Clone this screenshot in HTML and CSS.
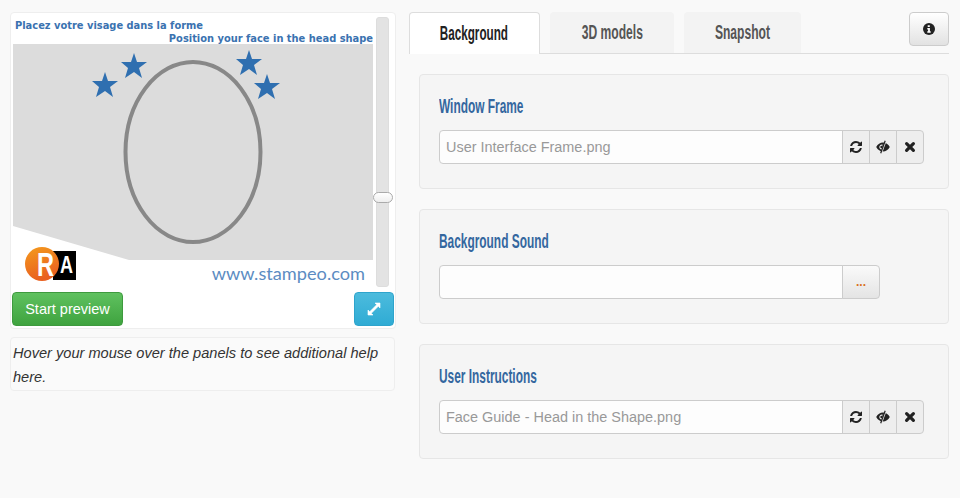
FILE: index.html
```html
<!DOCTYPE html>
<html lang="en">
<head>
<meta charset="utf-8">
<title>Stampeo</title>
<link rel="stylesheet" href="styles.css">
</head>
<body>
<svg class="sprites" width="0" height="0" aria-hidden="true">
  <symbol id="i-refresh" viewBox="0 0 1536 1536"><path d="M1511 928q0 5-1 7-64 268-268 434.5t-478 166.5q-146 0-282.5-55t-243.5-157l-129 129q-19 19-45 19t-45-19-19-45v-448q0-26 19-45t45-19h448q26 0 45 19t19 45-19 45l-137 137q71 66 161 102t187 36q134 0 250-65t186-179q11-17 53-117 8-23 30-23h192q13 0 22.5 9.5t9.5 22.5zm25-800v448q0 26-19 45t-45 19h-448q-26 0-45-19t-19-45 19-45l138-138q-148-137-349-137-134 0-250 65t-186 179q-11 17-53 117-8 23-30 23h-199q-13 0-22.5-9.5t-9.5-22.5v-7q65-268 270-434.5t480-166.5q146 0 284 55.5t245 156.5l130-129q19-19 45-19t45 19 19 45z"/></symbol>
  <symbol id="i-eye" viewBox="0 0 14 14"><path fill-rule="evenodd" d="M0.200 7C1.800 4.100 4.200 2.500 7 2.500S12.200 4.100 13.800 7C12.200 9.900 9.800 11.500 7 11.500S1.800 9.900 0.200 7zM6.500 4.600A2.500 2.500 0 1 0 6.500 9.400Z"/><circle cx="5.600" cy="7" r="1.300"/><path d="M9.800 0.800L5.200 13.200" stroke="#eee" stroke-width="1.600"/><path d="M9.200 0.800L4.700 13.200" stroke="currentColor" stroke-width="1.200"/></symbol>
  <symbol id="i-times" viewBox="0 0 12 12"><path d="M2.600 2.600L9.400 9.400M9.400 2.600L2.600 9.400" fill="none" stroke="currentColor" stroke-width="3.200" stroke-linecap="round"/></symbol>
  <linearGradient id="orange" x1="0" y1="0" x2="0.300" y2="1"><stop offset="0" stop-color="#f49a1e"/><stop offset="1" stop-color="#e9601f"/></linearGradient>
</svg>
<main class="layout">
  <section class="left">
    <div class="preview-card">
      <div class="preview-row">
        <svg class="preview" viewBox="0 0 360 270" width="360" height="270" role="img" aria-label="Face guide preview">
          <rect width="360" height="270" fill="#fff"/>
          <text class="cap" x="2" y="12">Placez votre visage dans la forme</text>
          <text class="cap" x="360" y="25" text-anchor="end">Position your face in the head shape</text>
          <polygon points="0,27 360,27 360,243 116,243 0,209" fill="#dcdcdc"/>
          <ellipse cx="180" cy="135" rx="67.500" ry="90" fill="none" stroke="#888" stroke-width="4"/>
          <g fill="#2f6fb0">
            <polygon points="92,55 95,64 105,64 97,70 100,80 92,74 83,80 86,70 79,64 89,64"/>
            <polygon points="121,36 124,45 134,45 126,51 129,61 121,55 112,61 115,51 108,45 118,45"/>
            <polygon points="236,33 239,42 249,42 241,48 244,58 236,52 227,58 230,48 223,42 233,42"/>
            <polygon points="254,57 257,66 267,66 259,72 262,82 254,76 245,82 248,72 241,66 251,66"/>
          </g>
          <rect x="40" y="234" width="23" height="29" fill="#000"/>
          <circle cx="29" cy="247" r="17" fill="url(#orange)"/>
          <text class="logo-r" x="24" y="259" textLength="17" lengthAdjust="spacingAndGlyphs">R</text>
          <text class="logo-a" x="47" y="256" textLength="13" lengthAdjust="spacingAndGlyphs">A</text>
          <text class="site" x="352" y="263" text-anchor="end">www.stampeo.com</text>
        </svg>
        <div class="slider"><span class="slider-handle"></span></div>
      </div>
      <div class="preview-actions">
        <button class="btn btn-green" type="button">Start preview</button>
        <button class="btn btn-blue" type="button" aria-label="Fullscreen">
          <svg viewBox="0 0 14 14" width="14" height="14"><path d="M8 1H13V6L11.300 4.300L4.300 11.300L6 13H1V8L2.700 9.700L9.700 2.700Z" fill="#fff" stroke="#fff" stroke-width=".6"/></svg>
        </button>
      </div>
    </div>
    <p class="help">Hover your mouse over the panels to see additional help here.</p>
  </section>
  <section class="right">
    <header class="tabs">
      <a class="tab active"><span class="cond">Background</span></a>
      <a class="tab t2"><span class="cond">3D models</span></a>
      <a class="tab t3"><span class="cond">Snapshot</span></a>
      <button class="btn info" type="button" aria-label="Information">
        <svg viewBox="0 0 12 12" width="12" height="12"><circle cx="6" cy="6" r="6" fill="#222"/><path d="M4.700 2.300h2.100v1.600H4.700zM4.300 4.900h2.600v3.300h.8v1.500H4.300V8.200h.8V6.400h-.8z" fill="#fff"/></svg>
      </button>
    </header>
    <div class="panel">
      <h2><span class="cond">Window Frame</span></h2>
      <div class="field">
        <input class="text" type="text" value="User Interface Frame.png" readonly>
        <button class="add"><svg class="ic refresh"><use href="#i-refresh"/></svg></button>
        <button class="add"><svg class="ic"><use href="#i-eye"/></svg></button>
        <button class="add end"><svg class="ic times"><use href="#i-times"/></svg></button>
      </div>
    </div>
    <div class="panel">
      <h2><span class="cond">Background Sound</span></h2>
      <div class="field">
        <input class="text" type="text" value="" readonly>
        <button class="browse">...</button>
      </div>
    </div>
    <div class="panel">
      <h2><span class="cond">User Instructions</span></h2>
      <div class="field">
        <input class="text" type="text" value="Face Guide - Head in the Shape.png" readonly>
        <button class="add"><svg class="ic refresh"><use href="#i-refresh"/></svg></button>
        <button class="add"><svg class="ic"><use href="#i-eye"/></svg></button>
        <button class="add end"><svg class="ic times"><use href="#i-times"/></svg></button>
      </div>
    </div>
  </section>
</main>
</body>
</html>
```
FILE: styles.css
```css
* { box-sizing: border-box; }
html, body { margin: 0; padding: 0; height: 100%; }
body { background: #f9f9f9; font-family: "Liberation Sans", Arial, sans-serif; font-size: 14px; color: #333; overflow: hidden; }
.sprites { position: absolute; }
.layout { display: flex; gap: 13px; padding: 12px 11px 0 10px; }
.left { width: 386px; flex: none; }
.right { flex: 1; min-width: 0; }
.cond { display: inline-block; white-space: nowrap; font-family: "Liberation Sans", sans-serif; font-weight: 700; font-size: 19.500px; }

.preview-card { height: 317px; background: #fff; border: 1px solid #eee; border-radius: 4px; padding: 4px 1px 0 2px; }
.preview-row { display: flex; height: 270px; }
.preview { display: block; flex: none; }
.cap { font: bold 9.900px "DejaVu Sans", Verdana, sans-serif; fill: #3a72b0; }
.site { font: 400 18.200px Lato, "Open Sans", sans-serif; fill: #5c8cc2; }
.logo-r { font: bold 34px "Liberation Sans", sans-serif; fill: #fff; }
.logo-a { font: bold 24px "Liberation Sans", sans-serif; fill: #fff; }

.slider { position: relative; width: 13px; margin-left: 3px; background: #e3e3e3; border: 1px solid #ddd; border-radius: 3px; }
.slider-handle { position: absolute; left: -4px; top: 174px; width: 20px; height: 11px; background: linear-gradient(#fff, #eee); border: 1px solid #aaa; border-radius: 6px; }

.preview-actions { display: flex; justify-content: space-between; margin-top: 5px; }
.btn { font: inherit; border-radius: 4px; cursor: pointer; padding: 0; display: flex; align-items: center; justify-content: center; }
.btn-green { width: 111px; height: 34px; margin-left: -1px; font-size: 14.500px; color: #fff; border: 1px solid #3e9a3e; background: linear-gradient(#5fc15f, #3fa33f); }
.btn-blue { width: 40px; height: 34px; border: 1px solid #2ea4cc; background: linear-gradient(#4cbbdd, #2fabd4); }

.help { margin: 8px 1px 0 0; height: 54px; padding: 3px 2px; background: #fafafa; border: 1px solid #eee; border-radius: 4px; font-style: italic; font-size: 14.600px; line-height: 24px; color: #333; }

.tabs { display: flex; gap: 10px; height: 42px; border-bottom: 1px solid #ddd; }
.tab { display: flex; align-items: center; justify-content: center; height: 41px; width: 124px; background: #f3f3f3; border-radius: 4px 4px 0 0; color: #555; }
.tab .cond { transform: scaleX(.62); }
.tab.active { width: 131px; height: 42px; padding-right: 2px; background: #fff; border: 1px solid #ddd; border-bottom: 0; color: #222; }
.tab.active .cond { transform: scaleX(.6); }
.t3 { width: 117px; }
.info { width: 40px; height: 34px; margin-left: auto; border: 1px solid #ccc; background: linear-gradient(#fff, #e2e2e2); }

.panel { margin: 20px 0 0 10px; height: 115px; padding: 20px 19px 0; background: #f5f5f5; border: 1px solid #e6e6e6; border-radius: 4px; }
.panel h2 { margin: 0 0 13px; height: 22px; font: 700 18px/22px "Liberation Sans", sans-serif; color: #34679f; }
.panel .cond { transform: scaleX(.61); transform-origin: left center; }
.field { display: flex; height: 34px; }
.text { width: 404px; height: 34px; padding: 0 6px; border: 1px solid #ccc; border-radius: 4px 0 0 4px; background: #fdfdfd; font: 14.450px "Liberation Sans", sans-serif; color: #999; outline: 0; }
.add { width: 28px; height: 34px; margin-left: -1px; padding: 0; display: flex; align-items: center; justify-content: center; border: 1px solid #ccc; background: #eee; color: #222; }
.add.end { border-radius: 0 4px 4px 0; }
.ic { width: 14px; height: 14px; fill: currentColor; }
.ic.refresh { width: 12px; height: 12px; }
.ic.times { width: 12px; height: 12px; }
.browse { width: 38px; height: 34px; margin-left: -1px; padding: 0; border: 1px solid #ccc; border-radius: 0 4px 4px 0; background: linear-gradient(#fafafa, #e4e4e4); color: #d9701e; font: bold 12px "Liberation Sans", sans-serif; }
```
